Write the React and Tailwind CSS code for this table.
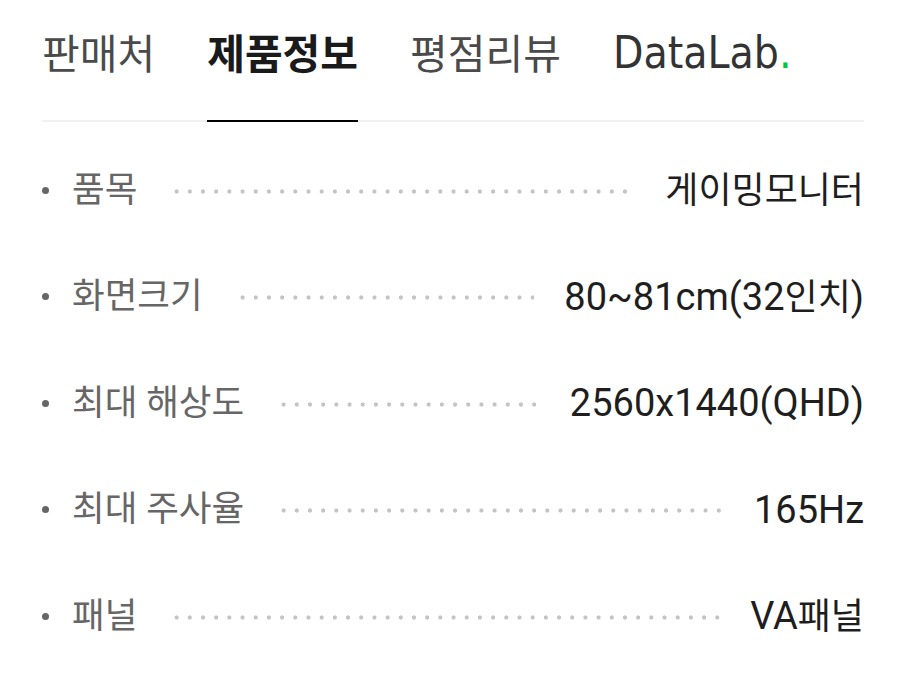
import React from "react";

const tabs = [
  { label: "판매처" },
  { label: "제품정보", active: true },
  { label: "평점리뷰" },
];

const specs = [
  { label: "품목", value: "게이밍모니터" },
  { label: "화면크기", value: "80~81cm(32인치)" },
  { label: "최대 해상도", value: "2560x1440(QHD)" },
  { label: "최대 주사율", value: "165Hz" },
  { label: "패널", value: "VA패널" },
];

// hangul runs are set a touch smaller than the latin/digit runs
const Value = ({ text }) => (
  <span className="text-[38px] text-[#1e1e1e] whitespace-nowrap leading-none">
    {text.split(/([\uAC00-\uD7A3]+)/).map((part, i) =>
      /[\uAC00-\uD7A3]/.test(part) ? (
        <span key={i} className="text-[36px]">
          {part}
        </span>
      ) : (
        part
      )
    )}
  </span>
);

const App = () => {
  return (
    <div
      className="w-[904px] h-[690px] bg-white pl-[42px] pr-[40px]"
      style={{ fontFamily: "Roboto, 'Noto Sans CJK KR', sans-serif" }}
    >
      {/* Tabs */}
      <div className="flex items-end gap-[52px] border-b-2 border-[#f1f1f4] h-[122px]">
        {tabs.map((tab) => (
          <div
            key={tab.label}
            className={
              tab.active
                ? "h-[122px] pt-[31px] -mb-[2px] border-b-2 border-black text-[41px] leading-[48px] font-bold text-[#1a1a1a]"
                : "h-[122px] pt-[31px] -mb-[2px] text-[41px] leading-[48px] text-[#4a4a4a]"
            }
          >
            {tab.label}
          </div>
        ))}
        <div
          className="h-[122px] pt-[29px] -mb-[2px] text-[44px] leading-[48px] text-[#333]"
          style={{ fontFamily: "'DejaVu Sans Condensed', 'DejaVu Sans', sans-serif", fontStretch: "condensed" }}
        >
          DataLab<span className="text-[#00c73c]">.</span>
        </div>
      </div>

      {/* Spec list */}
      <ul className="pt-[15px]">
        {specs.map((spec) => (
          <li key={spec.label} className="flex items-center h-[106.5px]">
            <span className="w-[7px] h-[7px] rounded-full bg-[#666] mr-[23px]" />
            <span className="text-[35.5px] text-[#666] whitespace-nowrap leading-none">
              {spec.label}
            </span>
            <span className="flex-1 ml-[33px] mr-[30px] h-[5px] mt-[2px] bg-[radial-gradient(circle,#c4c4c4_1.9px,transparent_2.3px)] bg-[length:13.2px_5px] bg-repeat-x" />
            <Value text={spec.value} />
          </li>
        ))}
      </ul>
    </div>
  );
};

export default App;
